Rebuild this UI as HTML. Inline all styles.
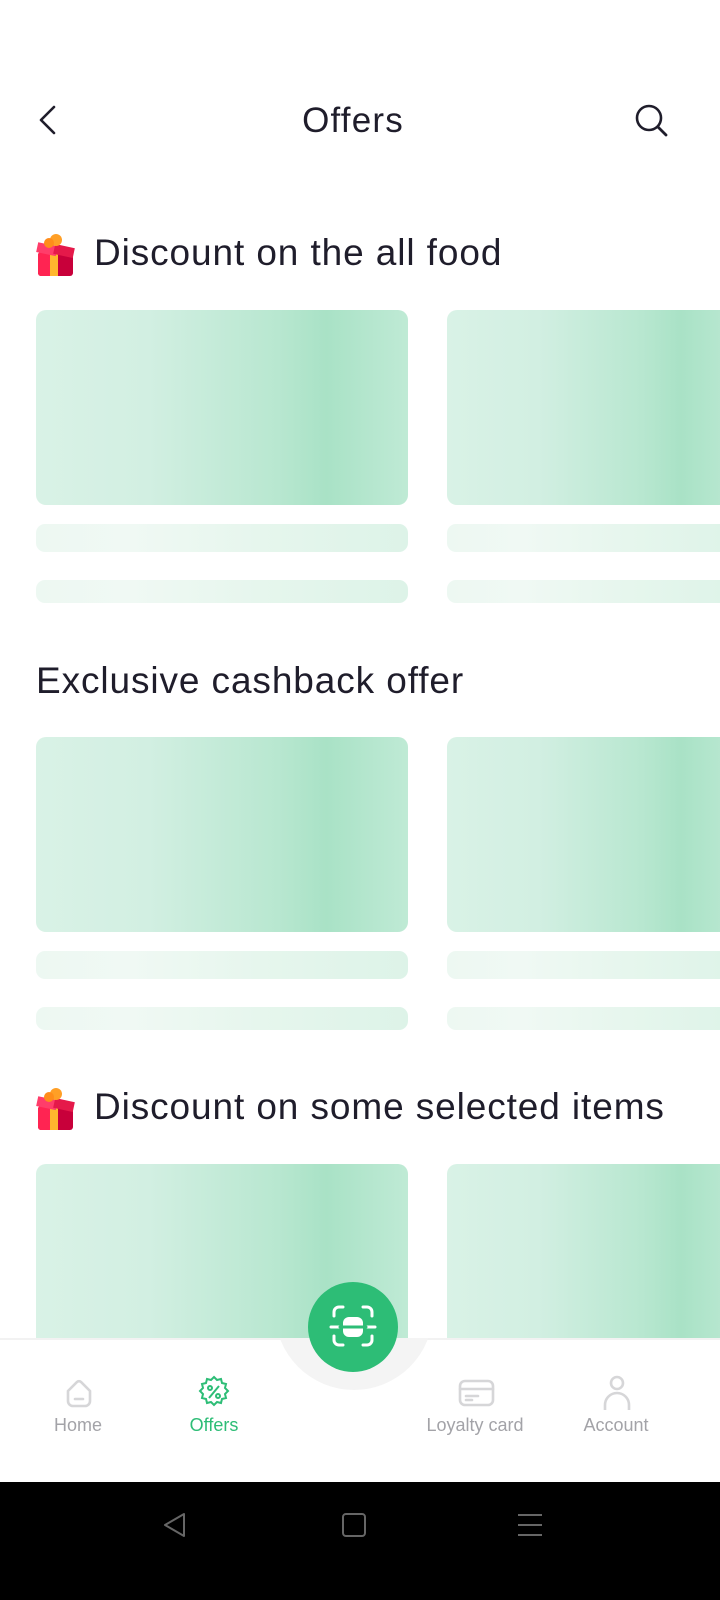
<!DOCTYPE html>
<html><head><style>
body{margin:0;width:720px;height:1600px;position:relative;overflow:hidden;background:#fff;font-family:"Liberation Sans",sans-serif;}
.a{position:absolute}
.card{position:absolute;border-radius:10px;background:linear-gradient(90deg,#d9f2e6 0%,#d2efe2 30%,#b8e7d0 65%,#a9e2c6 78%,#bfead5 100%)}
.bar{position:absolute;border-radius:9px;background:linear-gradient(90deg,#edf8f2 0%,#f0f9f4 25%,#e6f6ed 60%,#ddf3e8 100%)}
.t{position:absolute;font-size:37px;letter-spacing:0.9px;color:#1f1d2b;white-space:nowrap}
.nl{position:absolute;font-size:18px;color:#a3a3a8;text-align:center;width:140px}
</style></head><body>
<svg class="a" style="left:36px;top:104px" width="24" height="34" viewBox="0 0 24 34"><path d="M18 3 L5 16 L18 29" fill="none" stroke="#1f1d2b" stroke-width="2.6" stroke-linecap="round" stroke-linejoin="round"/></svg>
<div class="t" style="left:0;width:706px;text-align:center;top:101px;font-size:35px;letter-spacing:1.2px">Offers</div>
<svg class="a" style="left:632px;top:101px" width="40" height="40" viewBox="0 0 40 40"><circle cx="17" cy="17" r="12" fill="none" stroke="#1f1d2b" stroke-width="2.6"/><path d="M26 26 L34 34" stroke="#1f1d2b" stroke-width="2.8" stroke-linecap="round"/></svg>

<svg class="a" style="left:36px;top:232px" width="40" height="45" viewBox="0 0 40 45"><rect x="2" y="20" width="35" height="24" rx="3" fill="#c8003a"/><rect x="2" y="20" width="18" height="24" rx="3" fill="#ff2452"/><rect x="14" y="18" width="8" height="26" fill="#ffb72e"/><rect x="1" y="12" width="20" height="10" transform="rotate(12 10 17)" fill="#ff3d6a"/><rect x="18" y="14" width="20" height="10" transform="rotate(12 28 19)" fill="#e5194a"/><circle cx="20" cy="8" r="6" fill="#ff9f26"/><circle cx="13" cy="11" r="5" fill="#ff8c1a"/></svg>
<div class="t" style="left:94px;top:232px">Discount on the all food</div>
<div class="card" style="left:36px;top:310px;width:372px;height:195px"></div>
<div class="card" style="left:447px;top:310px;width:300px;height:195px"></div>
<div class="bar" style="left:36px;top:524px;width:372px;height:28px"></div>
<div class="bar" style="left:447px;top:524px;width:300px;height:28px"></div>
<div class="bar" style="left:36px;top:580px;width:372px;height:23px"></div>
<div class="bar" style="left:447px;top:580px;width:300px;height:23px"></div>

<div class="t" style="left:36px;top:660px">Exclusive cashback offer</div>
<div class="card" style="left:36px;top:737px;width:372px;height:195px"></div>
<div class="card" style="left:447px;top:737px;width:300px;height:195px"></div>
<div class="bar" style="left:36px;top:951px;width:372px;height:28px"></div>
<div class="bar" style="left:447px;top:951px;width:300px;height:28px"></div>
<div class="bar" style="left:36px;top:1007px;width:372px;height:23px"></div>
<div class="bar" style="left:447px;top:1007px;width:300px;height:23px"></div>

<svg class="a" style="left:36px;top:1086px" width="40" height="45" viewBox="0 0 40 45"><rect x="2" y="20" width="35" height="24" rx="3" fill="#c8003a"/><rect x="2" y="20" width="18" height="24" rx="3" fill="#ff2452"/><rect x="14" y="18" width="8" height="26" fill="#ffb72e"/><rect x="1" y="12" width="20" height="10" transform="rotate(12 10 17)" fill="#ff3d6a"/><rect x="18" y="14" width="20" height="10" transform="rotate(12 28 19)" fill="#e5194a"/><circle cx="20" cy="8" r="6" fill="#ff9f26"/><circle cx="13" cy="11" r="5" fill="#ff8c1a"/></svg>
<div class="t" style="left:94px;top:1086px">Discount on some selected items</div>
<div class="card" style="left:36px;top:1164px;width:372px;height:220px"></div>
<div class="card" style="left:447px;top:1164px;width:300px;height:220px"></div>

<div class="a" style="left:0;top:1338px;width:720px;height:144px;background:#fff;border-top:2px solid #f2f2f2;box-sizing:border-box"></div>
<div class="a" style="left:275px;top:1260px;width:158px;height:130px;border-radius:0 0 79px 79px;background:#f4f4f4;clip-path:inset(78px 0 0 0)"></div>
<div class="a" style="left:308px;top:1282px;width:90px;height:90px;border-radius:50%;background:#2dbd76"></div>
<svg class="a" style="left:328px;top:1302px" width="50" height="50" viewBox="0 0 50 50" fill="none" stroke="#fff" stroke-width="3" stroke-linecap="round"><path d="M6 14 V10 a5 5 0 0 1 5-5 h4 M35 5 h4 a5 5 0 0 1 5 5 v4 M44 34 v4 a5 5 0 0 1-5 5 h-4 M15 43 h-4 a5 5 0 0 1-5-5 v-4"/><path d="M3 25 H47"/><rect x="15" y="15" width="20" height="20" rx="6" fill="#fff" stroke="none"/><path d="M12 25 H38" stroke="#2dbd76"/></svg>

<svg class="a" style="left:63px;top:1377px" width="32" height="32" viewBox="0 0 32 32" fill="none" stroke="#d6d6d8" stroke-width="2.6" stroke-linecap="round"><path d="M5 14 L14 5 a3 3 0 0 1 4 0 L27 14 v10 a5 5 0 0 1-5 5 H10 a5 5 0 0 1-5-5 Z"/><path d="M12 22 H20"/></svg>
<div class="nl" style="left:8px;top:1415px">Home</div>
<svg class="a" style="left:196px;top:1374px" width="36" height="36" viewBox="0 0 36 36" fill="none" stroke="#2dbd76" stroke-width="2"><path d="M18 3 l3 3 4-1 1 4 4 1-1 4 3 3-3 3 1 4-4 1-1 4-4-1-3 3-3-3-4 1-1-4-4-1 1-4-3-3 3-3-1-4 4-1 1-4 4 1z"/><path d="M13 24 L23 12"/><circle cx="14" cy="14" r="2"/><circle cx="22" cy="22" r="2"/></svg>
<div class="nl" style="left:144px;top:1415px;color:#2dbd76">Offers</div>
<svg class="a" style="left:458px;top:1378px" width="38" height="30" viewBox="0 0 38 30" fill="none" stroke="#d6d6d8" stroke-width="2.6" stroke-linecap="round"><rect x="2" y="3" width="33" height="24" rx="5"/><path d="M2 11 H35 M8 18 H20 M8 22 H14"/></svg>
<div class="nl" style="left:405px;top:1415px">Loyalty card</div>
<svg class="a" style="left:602px;top:1375px" width="30" height="36" viewBox="0 0 30 36" fill="none" stroke="#d6d6d8" stroke-width="2.6"><circle cx="15" cy="8" r="6"/><path d="M3 35 V30 a12 12 0 0 1 24 0 V35"/></svg>
<div class="nl" style="left:546px;top:1415px">Account</div>

<div class="a" style="left:0;top:1482px;width:720px;height:118px;background:#000"></div>
<svg class="a" style="left:160px;top:1510px" width="30" height="30" viewBox="0 0 30 30" fill="none" stroke="#666" stroke-width="2"><path d="M24 4 V26 L5 15 Z" stroke-linejoin="round"/></svg>
<div class="a" style="left:342px;top:1513px;width:20px;height:20px;border:2px solid #666;border-radius:4px"></div>
<svg class="a" style="left:516px;top:1512px" width="28" height="26" viewBox="0 0 28 26" stroke="#666" stroke-width="2"><path d="M2 3 H26 M2 13 H26 M2 23 H26"/></svg>
</body></html>
